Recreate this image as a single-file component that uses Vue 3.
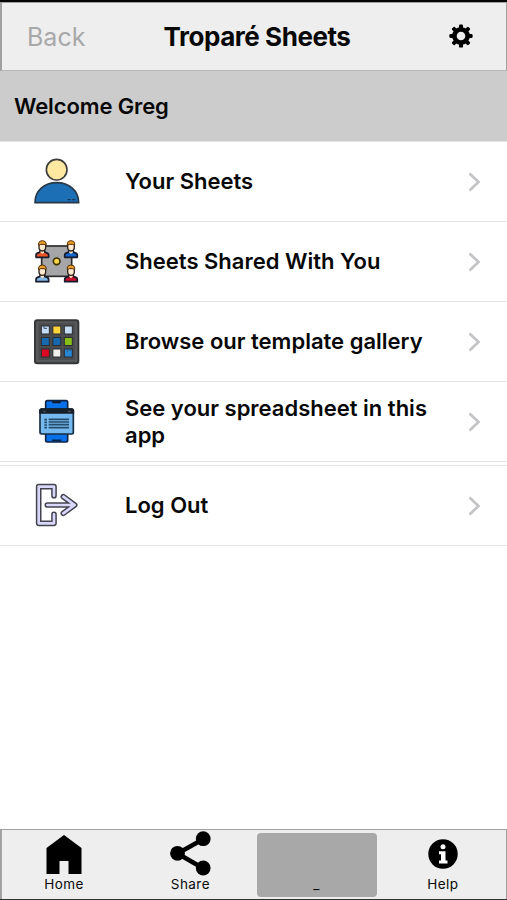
<template>
  <div class="screen">
    <header class="top-bar">
      <button class="back" disabled>Back</button>
      <h1 class="title">Troparé Sheets</h1>
      <button class="settings" aria-label="Settings">
        <svg width="24" height="24" viewBox="-12 -12 24 24">
          <circle r="6.6" fill="none" stroke="#000" stroke-width="4.6" />
          <rect v-for="n in 8" :key="n" x="-2" y="-11.6" width="4" height="4.6" rx="1.2" :transform="`rotate(${n * 45})`" />
        </svg>
      </button>
    </header>

    <div class="welcome"><span>Welcome {{ userName }}</span></div>

    <ul class="menu">
      <li v-for="item in items" :key="item.id" class="menu-item" :class="{ separated: item.id === 'logout' }">
        <svg v-if="item.id === 'sheets'" class="menu-icon" viewBox="0 -25 240 237">
          <circle cx="110" cy="58" r="31" fill="#ffe9a0" stroke="#3d3d3d" stroke-width="5" />
          <path d="M45 157C45 121 73 97 110 97S176 121 176 157Z" fill="#1c6fb5" stroke="#293746" stroke-width="5" stroke-linejoin="round" />
          <path d="M143 148H152M157 148H166" stroke="#18344f" stroke-width="4" />
        </svg>

        <svg v-else-if="item.id === 'shared'" class="menu-icon" viewBox="0 -25 240 237">
          <rect x="65" y="47" width="90" height="91" fill="#a6a6a8" stroke="#2b2b2b" stroke-width="5" />
          <circle cx="110" cy="93" r="10" fill="#ffd84a" stroke="#3a3000" stroke-width="5" />
          <g v-for="p in people" :key="p.shirt" :transform="`translate(${p.x} ${p.y})`">
            <path d="M-19 51V45Q-19 37 -8 36L-6 30H6L8 36Q19 37 19 45V51Z" :fill="p.shirt" stroke="#171b2b" stroke-width="5" stroke-linejoin="round" />
            <path d="M-5 31H5V36L0 41L-5 36Z" fill="#ffe4bd" />
            <path d="M-10 10V21Q-10 32 0 32T10 21V10Z" fill="#ffe9cf" stroke="#30231b" stroke-width="4" />
            <path d="M-11 15V9Q-10 1 0 1T11 9V15L5 12H-5Z" fill="#ee9d25" stroke="#51320d" stroke-width="3" />
          </g>
        </svg>

        <svg v-else-if="item.id === 'gallery'" class="menu-icon" viewBox="0 -25 240 237">
          <rect x="45" y="30" width="130" height="129" rx="7" fill="#58595b" stroke="#353638" stroke-width="6" />
          <rect x="55" y="38" width="110" height="111" rx="3" fill="#4b4c4e" />
          <rect v-for="(color, i) in tiles" :key="i" :x="64 + (i % 3) * 34.5" :y="47 + Math.floor(i / 3) * 34.5" width="24" height="24" :fill="color" stroke="#292d32" stroke-width="3" />
          <path d="M72 48V54H81M143 118V124M151 117V122" fill="none" stroke="#36516b" stroke-width="3" />
        </svg>

        <svg v-else-if="item.id === 'preview'" class="menu-icon" viewBox="0 -25 240 237">
          <rect x="77" y="31" width="66" height="124" rx="5" fill="#0870e8" stroke="#0c2449" stroke-width="5" />
          <path d="M95 33H124L121 39H98Z" fill="#111820" />
          <path d="M96 150H124" stroke="#09254c" stroke-width="5" />
          <rect x="60" y="56" width="100" height="75" rx="5" fill="#75b9ef" stroke="#172e43" stroke-width="5" />
          <path d="M60 68V61Q60 56 65 56H155Q160 56 160 61V68Z" fill="#17202b" stroke="#17202b" stroke-width="5" />
          <path d="M69 63H77M143 63H153" stroke="#57525c" stroke-width="3" />
          <path d="M73 88H81M73 96H81M73 104H81M73 112H81M86 87H147M86 95H147M86 103H147M86 112H147" stroke="#254c69" stroke-width="5" />
        </svg>

        <svg v-else class="menu-icon" viewBox="0 -27 240 237">
          <path v-for="line in logoutLines" :key="line.width" d="M102 62V35H56V145H102V118M82 90H163M130 65L164 90L130 115" fill="none" :stroke="line.color" :stroke-width="line.width" stroke-linecap="round" stroke-linejoin="round" />
        </svg>

        <span class="menu-label">{{ item.label }}</span>
        <svg class="chevron" width="14" height="20" viewBox="0 0 14 20">
          <path d="M2.5 1.5L11.5 10L2.5 18.5" fill="none" stroke="#c4c4c6" stroke-width="2.7" />
        </svg>
      </li>
    </ul>

    <nav class="tab-bar">
      <button class="tab home">
        <svg width="36" height="40" viewBox="0 0 36 40">
          <path d="M18 0L35.5 13V39H22.5V26H13.5V39H.5V13Z" />
        </svg>
        <span>Home</span>
      </button>
      <button class="tab share">
        <svg width="42" height="46" viewBox="0 0 42 46">
          <path d="M34.5 9L8.5 23.5L34.5 38.5" fill="none" stroke="#000" stroke-width="4.5" />
          <circle cx="34.2" cy="8.7" r="7.4" />
          <circle cx="8.5" cy="23.3" r="7.4" />
          <circle cx="34.2" cy="38" r="7.4" />
        </svg>
        <span>Share</span>
      </button>
      <button class="tab active"><span>_</span></button>
      <button class="tab help">
        <svg width="30" height="30" viewBox="0 0 30 30">
          <circle cx="15" cy="15" r="14.7" />
          <circle cx="15" cy="7.8" r="2.5" fill="#fff" />
          <path d="M11 12.2H17.5V21.5H19.5V24.5H11V21.5H13V15.2H11Z" fill="#fff" />
        </svg>
        <span>Help</span>
      </button>
    </nav>
  </div>
</template>

<script setup>
import { ref } from 'vue';

const userName = ref('Greg');

const items = [
  { id: 'sheets', label: 'Your Sheets' },
  { id: 'shared', label: 'Sheets Shared With You' },
  { id: 'gallery', label: 'Browse our template gallery' },
  { id: 'preview', label: 'See your spreadsheet in this app' },
  { id: 'logout', label: 'Log Out' },
];

const people = [
  { x: 67, y: 30, shirt: '#ed5528' },
  { x: 153, y: 30, shirt: '#1266c9' },
  { x: 67, y: 103, shirt: '#82b9e8' },
  { x: 153, y: 103, shirt: '#c7102c' },
];

const tiles = ['#c5dcf5', '#ffd43b', '#c5dcf5', '#1768ad', '#1768ad', '#86bd16', '#df0822', '#f1eeee', '#2787d4'];

// dark outline first, lilac core over it
const logoutLines = [
  { width: 17, color: '#42434e' },
  { width: 8, color: '#d9d7fb' },
];
</script>

<style>
body {
  margin: 0;
}
</style>

<style scoped>
.screen {
  display: flex;
  flex-direction: column;
  box-sizing: border-box;
  height: 900px;
  border-top: 2px solid #050505;
  border-bottom: 1px solid #303030;
  background: #fff;
  color: #080808;
  font-family: Inter, "Liberation Sans", sans-serif;
  overflow: hidden;
}

button {
  padding: 0;
  border: 0;
  background: none;
  color: inherit;
  font-family: inherit;
}

.top-bar {
  display: grid;
  grid-template-columns: 1fr auto 1fr;
  align-items: center;
  box-sizing: border-box;
  height: 69px;
  border: 1px solid #a0a0a0;
  border-left-width: 2px;
  border-bottom-color: #b8b8b8;
  background: #eee;
}

.back {
  padding-left: 25px;
  color: #a8a8a8;
  font-size: 25px;
  text-align: left;
}

.title {
  margin: 0;
  padding-left: 6px;
  font-size: 26px;
  font-weight: 700;
  letter-spacing: -0.45px;
}

.settings {
  display: flex;
  justify-content: flex-end;
  padding: 0 33px 1px 0;
}

.welcome {
  display: flex;
  align-items: center;
  height: 70px;
  padding-left: 14px;
  border-bottom: 1px solid #e6e6e6;
  background: #ccc;
  font-size: 22px;
  font-weight: 600;
  letter-spacing: -0.12px;
}

.menu {
  flex: 1;
  margin: 0;
  padding: 0;
  list-style: none;
}

.menu-item {
  display: flex;
  align-items: center;
  box-sizing: border-box;
  height: 80px;
  padding: 0 26px 0 20px;
  border-bottom: 1px solid #e6e6e6;
}

.menu-item.separated {
  height: 81px;
  margin-top: 3px;
  border-top: 1px solid #e6e6e6;
}

.menu-icon {
  flex: none;
  width: 80px;
  height: 79px;
}

.menu-label {
  flex: 1;
  padding: 0 24px 0 25px;
  font-size: 22px;
  font-weight: 600;
  line-height: 26.5px;
}

.chevron {
  flex: none;
}

.tab-bar {
  display: grid;
  grid-template-columns: repeat(4, 1fr);
  box-sizing: border-box;
  height: 70px;
  border: 1px solid #a0a0a0;
  border-bottom: 0;
  background: #eee;
  box-shadow: inset 1px 0 #a8a8a8;
}

.tab {
  display: flex;
  flex-direction: column;
  align-items: center;
  justify-content: flex-end;
  padding-bottom: 8px;
  font-size: 13.5px;
  line-height: 16px;
  letter-spacing: 0.45px;
}

.tab.home svg {
  margin-bottom: 1px;
}

.tab.share svg {
  margin-bottom: 0;
}

.tab.help svg {
  margin: 0 0 7px 1px;
}

.tab.active {
  margin: 3px;
  padding-bottom: 5px;
  border-radius: 4px;
  background: #a8a8a8;
}
</style>
